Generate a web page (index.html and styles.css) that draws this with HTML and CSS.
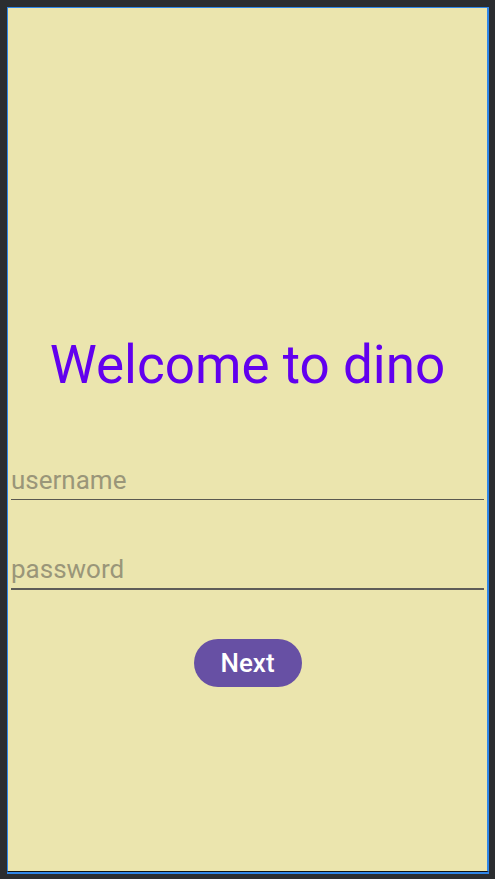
FILE: index.html
```html
<!DOCTYPE html>
<html>
<head>
<meta charset="utf-8">
<link rel="stylesheet" href="styles.css">
</head>
<body>
<div class="device">
  <div class="screen">
    <h1 class="title">Welcome to dino</h1>
    <div class="field field-user"><span class="hint">username</span></div>
    <div class="field field-pass"><span class="hint">password</span></div>
    <div class="actions"><button class="next">Next</button></div>
  </div>
</div>
</body>
</html>
```
FILE: styles.css
```css
html, body {
  margin: 0;
  padding: 0;
  background: #2b2d30;
  width: 495px;
  height: 879px;
  overflow: hidden;
}
.device {
  padding: 7px 0 0 7px;
}
.screen {
  width: 479px;
  height: 863px;
  background: #ebe5ae;
  border: 1px solid #2f86e8;
  border-right-width: 2px;
  border-bottom: 1px solid #111;
  box-shadow: 0 2px 0 #2f86e8;
  box-sizing: content-box;
  display: flex;
  flex-direction: column;
  padding: 0;
  font-family: Roboto, "Noto Sans", sans-serif;
}
.title {
  margin: 326px 0 0 0;
  font-size: 53px;
  font-weight: 400;
  line-height: 62px;
  color: #6200ee;
  text-align: center;
}
.field {
  margin: 0 3px;
  border-bottom: 1px solid #5a5850;
  height: 34px;
  display: flex;
  align-items: flex-end;
}
.field-user {
  margin-top: 69px;
}
.field-pass {
  margin-top: 54px;
  border-bottom: 2px solid #5e5c58;
}
.hint {
  font-size: 26px;
  line-height: 30px;
  color: #9a9679;
  padding-bottom: 4px;
}
.actions {
  display: flex;
  justify-content: center;
  margin-top: 49px;
}
.next {
  width: 108px;
  height: 48px;
  border: none;
  border-radius: 24px;
  background: #6750a4;
  color: #fff;
  font-family: Roboto, "Noto Sans", sans-serif;
  font-weight: 500;
  font-size: 26px;
  padding: 0;
}
```
